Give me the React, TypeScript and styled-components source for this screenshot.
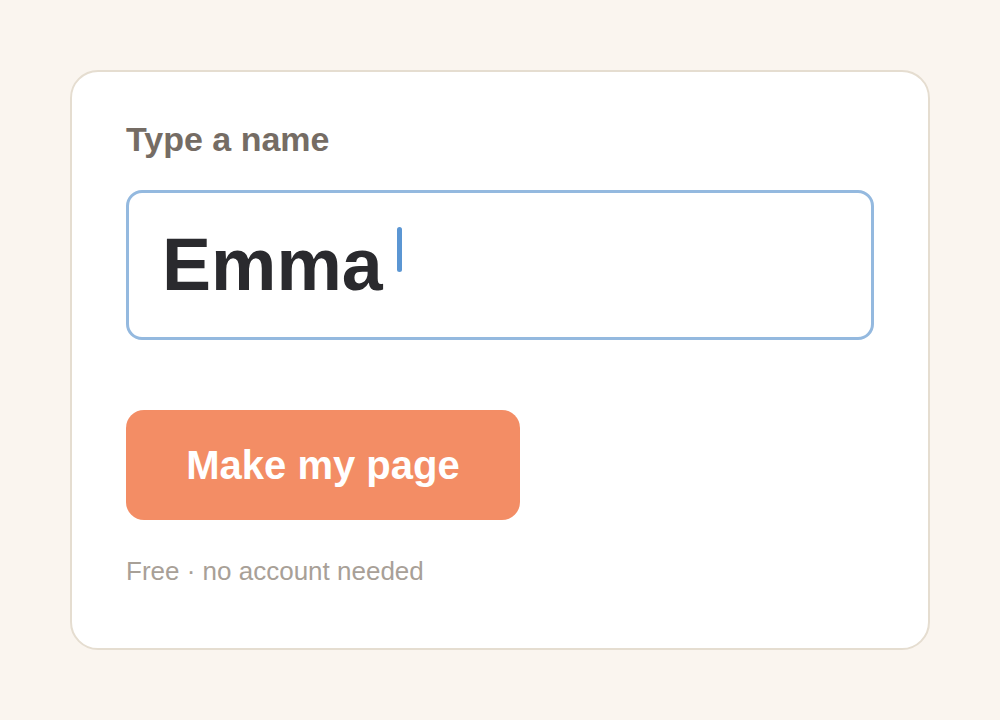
import React from "react";
import styled, { createGlobalStyle } from "styled-components";

const Global = createGlobalStyle`
  html, body { margin: 0; padding: 0; background: #faf5ef; }
  body { font-family: "Liberation Sans", Arial, sans-serif; }
`;

const Page = styled.div`
  width: 1000px;
  height: 720px;
  box-sizing: border-box;
  padding: 70px;
  background: #faf5ef;
`;

const Card = styled.div`
  width: 860px;
  height: 580px;
  box-sizing: border-box;
  background: #ffffff;
  border: 2px solid #e5ddd0;
  border-radius: 28px;
  padding: 50px 54px 0 54px;
  display: flex;
  flex-direction: column;
  align-items: flex-start;
`;

const Label = styled.label`
  font-size: 34px;
  line-height: 1;
  font-weight: 700;
  color: #756c64;
  margin-bottom: 34px;
`;

const InputBox = styled.div`
  align-self: stretch;
  height: 150px;
  box-sizing: border-box;
  border: 3px solid #94b9df;
  border-radius: 16px;
  padding-left: 33px;
  display: flex;
  align-items: center;
  margin-bottom: 70px;
`;

const Value = styled.span`
  font-size: 73.5px;
  line-height: 1;
  font-weight: 700;
  color: #2a2a2e;
`;

const Caret = styled.span`
  width: 5px;
  height: 45px;
  border-radius: 3px;
  background: #5b96d3;
  margin-left: 14px;
  margin-bottom: 31px;
`;

const Button = styled.button`
  width: 394px;
  height: 110px;
  border: none;
  border-radius: 18px;
  background: #f38d65;
  color: #ffffff;
  font-family: "Liberation Sans", Arial, sans-serif;
  font-size: 40px;
  font-weight: 700;
  line-height: 1;
  padding: 0;
  cursor: pointer;
  margin-bottom: 38px;
`;

const Note = styled.p`
  margin: 0;
  font-size: 26px;
  line-height: 1;
  color: #a8a097;
`;

export default function App() {
  return (
    <>
      <Global />
      <Page>
        <Card>
          <Label>Type a name</Label>
          <InputBox>
            <Value>Emma</Value>
            <Caret />
          </InputBox>
          <Button>Make my page</Button>
          <Note>Free · no account needed</Note>
        </Card>
      </Page>
    </>
  );
}
